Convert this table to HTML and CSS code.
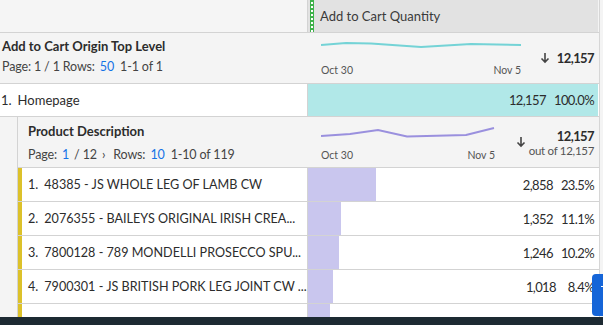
FILE: index.html
```html
<!DOCTYPE html>
<html>
<head>
<meta charset="utf-8">
<link rel="stylesheet" href="styles.css">
</head>
<body>
<div class="table">
  <div class="row hdr">
    <div class="cell blank"></div>
    <div class="cell colhead">
      <span class="grip"></span>
      <span class="colname">Add to Cart Quantity</span>
      <span class="grip right"></span>
    </div>
  </div>

  <div class="row sechead">
    <div class="cell dimcell">
      <div class="dimname">Add to Cart Origin Top Level</div>
      <div class="pager">Page: 1 / 1 Rows: <span class="blue">50</span> <span class="range">1-1 of 1</span></div>
    </div>
    <div class="cell metric">
      <div class="spark">
        <svg width="200" height="10" viewBox="0 0 200 10"><polyline points="0,5 25,3 50,3.5 100,7 150,4 200,5" fill="none" stroke="#74d3d6" stroke-width="2"/></svg>
        <div class="dates"><span>Oct 30</span><span>Nov 5</span></div>
      </div>
      <svg class="arrow" width="10" height="12" viewBox="0 0 10 12"><path d="M5 1v9M1.5 6.5L5 10l3.5-3.5" fill="none" stroke="#444" stroke-width="1.6"/></svg>
      <div class="total"><b>12,157</b></div>
    </div>
  </div>

  <div class="row item top">
    <div class="cell label"><span class="num">1.</span>Homepage</div>
    <div class="cell value teal"><span class="v">12,157</span><span class="p">100.0%</span></div>
  </div>

  <div class="nested">
    <div class="row sechead sub">
      <div class="cell dimcell">
        <div class="dimname">Product Description</div>
        <div class="pager">Page: <span class="blue">1</span> / 12 <span class="chev">›</span> Rows: <span class="blue">10</span> <span class="range">1-10 of 119</span></div>
      </div>
      <div class="cell metric">
        <div class="spark">
          <svg width="174" height="12" viewBox="0 0 174 12"><polyline points="0,10 29,8 57,4 86,10.5 145,9 173,2" fill="none" stroke="#9a90de" stroke-width="2"/></svg>
          <div class="dates"><span>Oct 30</span><span>Nov 5</span></div>
        </div>
        <svg class="arrow" width="10" height="12" viewBox="0 0 10 12"><path d="M5 1v9M1.5 6.5L5 10l3.5-3.5" fill="none" stroke="#444" stroke-width="1.6"/></svg>
        <div class="total"><b>12,157</b><span class="outof">out of 12,157</span></div>
      </div>
    </div>

    <div class="row item prod">
      <div class="cell label"><span class="num">1.</span>48385 - JS WHOLE LEG OF LAMB CW</div>
      <div class="cell value"><span class="bar" style="width:68px"></span><span class="v">2,858</span><span class="p">23.5%</span></div>
    </div>
    <div class="row item prod">
      <div class="cell label"><span class="num">2.</span>2076355 - BAILEYS ORIGINAL IRISH CREA...</div>
      <div class="cell value"><span class="bar" style="width:33px"></span><span class="v">1,352</span><span class="p">11.1%</span></div>
    </div>
    <div class="row item prod">
      <div class="cell label"><span class="num">3.</span>7800128 - 789 MONDELLI PROSECCO SPU...</div>
      <div class="cell value"><span class="bar" style="width:31px"></span><span class="v">1,246</span><span class="p">10.2%</span></div>
    </div>
    <div class="row item prod">
      <div class="cell label"><span class="num">4.</span>7900301 - JS BRITISH PORK LEG JOINT CW ...</div>
      <div class="cell value"><span class="bar" style="width:25px"></span><span class="v">1,018</span><span class="p">8.4%</span></div>
    </div>
    <div class="row item prod last">
      <div class="cell label"></div>
      <div class="cell value"><span class="bar" style="width:22px"></span></div>
    </div>
  </div>
</div>
<div class="taskbar"></div>
<div class="fab"><span class="fabmark"></span></div>
</body>
</html>
```

FILE: styles.css
```css
html, body {
  margin: 0;
  padding: 0;
}
body {
  width: 603px;
  height: 325px;
  overflow: hidden;
  background: #f4f4f4;
  font-family: Lato, "Open Sans", sans-serif;
  font-size: 13px;
  color: #2c2c2c;
  position: relative;
}
.table {
  width: 599px;
  border-right: 1px solid #d6d6d6;
  height: 317px;
  overflow: hidden;
}
.row {
  display: grid;
  grid-template-columns: 308px 290px;
  border-bottom: 1px solid #d3d3d3;
}
.cell {
  min-width: 0;
}
.hdr {
  height: 32px;
}
.blank {
  background: #f5f5f5;
  border-right: 1px solid #d3d3d3;
}
.colhead {
  background: #e2e2e2;
  display: flex;
  align-items: center;
  position: relative;
}
.grip {
  flex: none;
  width: 4px;
  height: 32px;
  margin-left: 2px;
  background-color: #3fb14b;
  background-image: radial-gradient(circle, #ffffff 0.8px, transparent 1.1px);
  background-size: 4px 4px;
  background-position: 0 1px;
}
.grip.right {
  position: absolute;
  right: -5px;
  top: 0;
}
.colname {
  margin-left: 6px;
  color: #3a3a3a;
  font-size: 13px;
}
.sechead {
  height: 50px;
  background: #f4f4f4;
}
.dimcell {
  padding: 5px 0 0 2px;
  display: flex;
  flex-direction: column;
  gap: 5px;
}
.dimname {
  font-weight: bold;
  font-size: 13px;
}
.pager {
  font-size: 12.5px;
  color: #444;
  white-space: nowrap;
  letter-spacing: -0.15px;
}
.blue {
  color: #1473e6;
  margin: 0 2px;
}
.range {
  margin-left: 1px;
}
.chev {
  margin: 0 5px 0 2px;
}
.metric {
  display: flex;
  align-items: center;
  padding-left: 13px;
  padding-right: 4px;
}
.spark {
  flex: none;
  display: flex;
  flex-direction: column;
  align-self: flex-start;
  padding-top: 7px;
}
.spark svg {
  display: block;
}
.dates {
  display: flex;
  justify-content: space-between;
  font-size: 10.5px;
  color: #555;
  margin-top: 14px;
}
.arrow {
  flex: none;
  margin-left: 19px;
}
.total {
  flex: none;
  margin-left: auto;
  display: flex;
  flex-direction: column;
  align-items: flex-end;
  font-size: 13px;
  white-space: nowrap;
}
.total b {
  letter-spacing: -0.6px;
}
.outof {
  font-size: 11.5px;
  letter-spacing: -0.3px;
  color: #555;
}
.item {
  height: 32px;
  background: #fff;
}
.label {
  display: flex;
  align-items: center;
  white-space: nowrap;
  overflow: hidden;
  padding-left: 1px;
  border-right: 1px solid #d3d3d3;
}
.num {
  margin-right: 6px;
}
.value {
  display: flex;
  align-items: center;
  justify-content: flex-end;
  position: relative;
  padding-right: 4px;
  letter-spacing: -0.6px;
}
.teal {
  background: #b1e8e8;
}
.v {
  margin-right: 8px;
  position: relative;
}
.p {
  min-width: 30px;
  text-align: right;
  position: relative;
}
.nested {
  margin-left: 17px;
  border-left: 1px solid #d3d3d3;
}
.nested .row {
  grid-template-columns: 290px 290px;
}
.sub .dimcell {
  padding: 6px 0 0 10px;
  gap: 8px;
}
.sub .metric {
  padding-left: 13px;
}
.sub .spark {
  padding-top: 9px;
}
.sub .dates {
  margin-top: 11px;
}
.sub .arrow {
  margin-left: 21px;
}
.prod {
  height: 33px;
}
.prod .label {
  border-left: 4px solid #dcc12a;
  padding-left: 6px;
  font-size: 12.6px;
}
.bar {
  position: absolute;
  left: 0;
  top: 0;
  bottom: 0;
  background: #c9c6ee;
}
.taskbar {
  position: absolute;
  left: 0;
  right: 0;
  bottom: 0;
  height: 8px;
  background: #1d2a32;
}
.fab {
  position: absolute;
  left: 592px;
  top: 274px;
  width: 20px;
  height: 42px;
  background: #1565d8;
  border-radius: 4px;
}
.fabmark {
  position: absolute;
  left: 9px;
  top: 12px;
  width: 2px;
  height: 1px;
  background: #fff;
}
```
